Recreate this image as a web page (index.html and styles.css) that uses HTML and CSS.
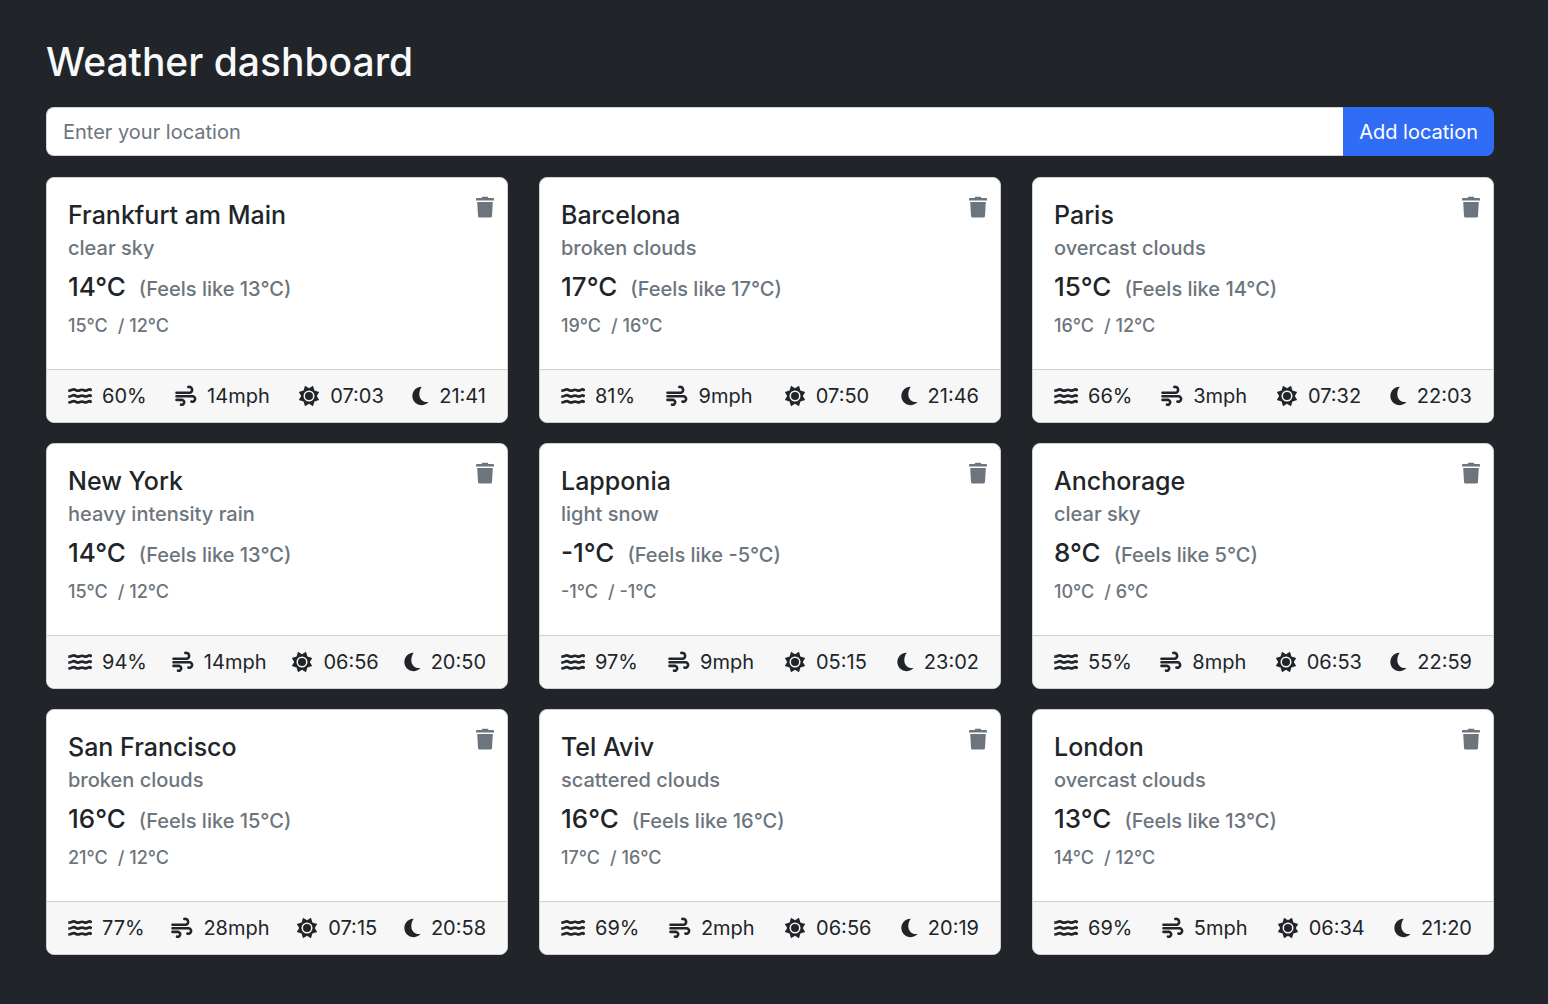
FILE: index.html
```
<!DOCTYPE html>
<html lang="en">
<head>
<meta charset="utf-8">
<meta name="viewport" content="width=device-width, initial-scale=1">
<title>Weather dashboard</title>
<link rel="stylesheet" href="styles.css">
</head>
<body>
<svg class="sprite" aria-hidden="true">
  <symbol id="water" viewBox="0 0 24 22">
    <g fill="none" stroke="currentColor" stroke-width="2.7">
      <path d="M.3 5.700Q2.3 5.700 4.2 4.700T8 5.200Q10 6.100 12 5.200T16 5.200Q18 6.100 20 4.900T23.700 5.700"/>
      <path d="M.3 11.600Q2.300 11.600 4.200 10.600T8 11.100Q10 12 12 11.100T16 11.100Q18 12 20 10.800T23.700 11.600"/>
      <path d="M.3 17.500Q2.300 17.500 4.200 16.500T8 17Q10 17.900 12 17T16 17Q18 17.900 20 16.700T23.700 17.500"/>
    </g>
  </symbol>
  <symbol id="wind" viewBox="0 0 22 22">
    <g fill="none" stroke="currentColor" stroke-width="2.6" stroke-linecap="round">
      <path d="M1.500 7.700H15A2.700 2.700 0 1 0 13.300 2"/>
      <path d="M1.500 11.300H17.400A2.700 2.700 0 1 1 16.400 16.500"/>
      <path d="M1.500 14.900H7.400A2.400 2.400 0 1 1 6 19.700"/>
    </g>
  </symbol>
  <symbol id="sun" viewBox="0 0 22 22">
    <path fill="currentColor" fill-rule="evenodd" d="M7 .8 11 3.2 15 .8 16.4 5.6 21.2 7 18.8 11 21.2 15 16.4 16.4 15 21.2 11 18.8 7 21.2 5.6 16.4 .8 15 3.2 11 .8 7 5.6 5.6ZM11 5.5A5.5 5.5 0 1 0 11 16.500A5.500 5.500 0 1 0 11 5.500Z"/>
    <circle cx="11" cy="11" r="4" fill="currentColor"/>
  </symbol>
  <symbol id="moon" viewBox="0 0 17 22">
    <path fill="currentColor" d="M9.800 1.800A9.200 9.200 0 1 0 16.500 17C10.800 17.800 7.300 14 7.300 9.300 7.300 6.500 8.200 3.800 9.800 1.800Z"/>
  </symbol>
  <symbol id="trash" viewBox="0 0 18 22">
    <path fill="currentColor" d="M1 2H5.500L6.300.8H11.700L12.500 2H17Q18 2 18 3V4.600H0V3Q0 2 1 2ZM1.200 6H16.800L16 20Q15.900 21.500 14.400 21.500H3.600Q2.100 21.500 2 20Z"/>
  </symbol>
</svg>
<main class="page">
  <h1 class="title">Weather dashboard</h1>
  <form class="search">
    <input class="search-input" type="text" placeholder="Enter your location" aria-label="Location">
    <button class="search-button" type="submit">Add location</button>
  </form>
  <section class="cards">
    <article class="card">
      <div class="card-body">
        <button class="remove" type="button" aria-label="Remove Frankfurt am Main"><svg><use href="#trash"/></svg></button>
        <h2 class="city">Frankfurt am Main</h2>
        <p class="sky">clear sky</p>
        <p class="now"><span class="temp">14°C</span><span class="feels">(Feels like 13°C)</span></p>
        <p class="range"><span>15°C</span><span>/ 12°C</span></p>
      </div>
      <footer class="stats">
        <span class="stat"><svg class="wide"><use href="#water"/></svg>60%</span>
        <span class="stat"><svg><use href="#wind"/></svg>14mph</span>
        <span class="stat"><svg><use href="#sun"/></svg>07:03</span>
        <span class="stat"><svg class="narrow"><use href="#moon"/></svg>21:41</span>
      </footer>
    </article>
    <article class="card">
      <div class="card-body">
        <button class="remove" type="button" aria-label="Remove Barcelona"><svg><use href="#trash"/></svg></button>
        <h2 class="city">Barcelona</h2>
        <p class="sky">broken clouds</p>
        <p class="now"><span class="temp">17°C</span><span class="feels">(Feels like 17°C)</span></p>
        <p class="range"><span>19°C</span><span>/ 16°C</span></p>
      </div>
      <footer class="stats">
        <span class="stat"><svg class="wide"><use href="#water"/></svg>81%</span>
        <span class="stat"><svg><use href="#wind"/></svg>9mph</span>
        <span class="stat"><svg><use href="#sun"/></svg>07:50</span>
        <span class="stat"><svg class="narrow"><use href="#moon"/></svg>21:46</span>
      </footer>
    </article>
    <article class="card">
      <div class="card-body">
        <button class="remove" type="button" aria-label="Remove Paris"><svg><use href="#trash"/></svg></button>
        <h2 class="city">Paris</h2>
        <p class="sky">overcast clouds</p>
        <p class="now"><span class="temp">15°C</span><span class="feels">(Feels like 14°C)</span></p>
        <p class="range"><span>16°C</span><span>/ 12°C</span></p>
      </div>
      <footer class="stats">
        <span class="stat"><svg class="wide"><use href="#water"/></svg>66%</span>
        <span class="stat"><svg><use href="#wind"/></svg>3mph</span>
        <span class="stat"><svg><use href="#sun"/></svg>07:32</span>
        <span class="stat"><svg class="narrow"><use href="#moon"/></svg>22:03</span>
      </footer>
    </article>
    <article class="card">
      <div class="card-body">
        <button class="remove" type="button" aria-label="Remove New York"><svg><use href="#trash"/></svg></button>
        <h2 class="city">New York</h2>
        <p class="sky">heavy intensity rain</p>
        <p class="now"><span class="temp">14°C</span><span class="feels">(Feels like 13°C)</span></p>
        <p class="range"><span>15°C</span><span>/ 12°C</span></p>
      </div>
      <footer class="stats">
        <span class="stat"><svg class="wide"><use href="#water"/></svg>94%</span>
        <span class="stat"><svg><use href="#wind"/></svg>14mph</span>
        <span class="stat"><svg><use href="#sun"/></svg>06:56</span>
        <span class="stat"><svg class="narrow"><use href="#moon"/></svg>20:50</span>
      </footer>
    </article>
    <article class="card">
      <div class="card-body">
        <button class="remove" type="button" aria-label="Remove Lapponia"><svg><use href="#trash"/></svg></button>
        <h2 class="city">Lapponia</h2>
        <p class="sky">light snow</p>
        <p class="now"><span class="temp">-1°C</span><span class="feels">(Feels like -5°C)</span></p>
        <p class="range"><span>-1°C</span><span>/ -1°C</span></p>
      </div>
      <footer class="stats">
        <span class="stat"><svg class="wide"><use href="#water"/></svg>97%</span>
        <span class="stat"><svg><use href="#wind"/></svg>9mph</span>
        <span class="stat"><svg><use href="#sun"/></svg>05:15</span>
        <span class="stat"><svg class="narrow"><use href="#moon"/></svg>23:02</span>
      </footer>
    </article>
    <article class="card">
      <div class="card-body">
        <button class="remove" type="button" aria-label="Remove Anchorage"><svg><use href="#trash"/></svg></button>
        <h2 class="city">Anchorage</h2>
        <p class="sky">clear sky</p>
        <p class="now"><span class="temp">8°C</span><span class="feels">(Feels like 5°C)</span></p>
        <p class="range"><span>10°C</span><span>/ 6°C</span></p>
      </div>
      <footer class="stats">
        <span class="stat"><svg class="wide"><use href="#water"/></svg>55%</span>
        <span class="stat"><svg><use href="#wind"/></svg>8mph</span>
        <span class="stat"><svg><use href="#sun"/></svg>06:53</span>
        <span class="stat"><svg class="narrow"><use href="#moon"/></svg>22:59</span>
      </footer>
    </article>
    <article class="card">
      <div class="card-body">
        <button class="remove" type="button" aria-label="Remove San Francisco"><svg><use href="#trash"/></svg></button>
        <h2 class="city">San Francisco</h2>
        <p class="sky">broken clouds</p>
        <p class="now"><span class="temp">16°C</span><span class="feels">(Feels like 15°C)</span></p>
        <p class="range"><span>21°C</span><span>/ 12°C</span></p>
      </div>
      <footer class="stats">
        <span class="stat"><svg class="wide"><use href="#water"/></svg>77%</span>
        <span class="stat"><svg><use href="#wind"/></svg>28mph</span>
        <span class="stat"><svg><use href="#sun"/></svg>07:15</span>
        <span class="stat"><svg class="narrow"><use href="#moon"/></svg>20:58</span>
      </footer>
    </article>
    <article class="card">
      <div class="card-body">
        <button class="remove" type="button" aria-label="Remove Tel Aviv"><svg><use href="#trash"/></svg></button>
        <h2 class="city">Tel Aviv</h2>
        <p class="sky">scattered clouds</p>
        <p class="now"><span class="temp">16°C</span><span class="feels">(Feels like 16°C)</span></p>
        <p class="range"><span>17°C</span><span>/ 16°C</span></p>
      </div>
      <footer class="stats">
        <span class="stat"><svg class="wide"><use href="#water"/></svg>69%</span>
        <span class="stat"><svg><use href="#wind"/></svg>2mph</span>
        <span class="stat"><svg><use href="#sun"/></svg>06:56</span>
        <span class="stat"><svg class="narrow"><use href="#moon"/></svg>20:19</span>
      </footer>
    </article>
    <article class="card">
      <div class="card-body">
        <button class="remove" type="button" aria-label="Remove London"><svg><use href="#trash"/></svg></button>
        <h2 class="city">London</h2>
        <p class="sky">overcast clouds</p>
        <p class="now"><span class="temp">13°C</span><span class="feels">(Feels like 13°C)</span></p>
        <p class="range"><span>14°C</span><span>/ 12°C</span></p>
      </div>
      <footer class="stats">
        <span class="stat"><svg class="wide"><use href="#water"/></svg>69%</span>
        <span class="stat"><svg><use href="#wind"/></svg>5mph</span>
        <span class="stat"><svg><use href="#sun"/></svg>06:34</span>
        <span class="stat"><svg class="narrow"><use href="#moon"/></svg>21:20</span>
      </footer>
    </article>
  </section>
</main>
</body>
</html>
```
FILE: styles.css
```
* {
  box-sizing: border-box;
}

body {
  margin: 0;
  background: #212529;
  color: #212529;
  font-family: Inter, "Liberation Sans", sans-serif;
  font-size: 20px;
  line-height: 32px;
}

h1,
h2,
p {
  margin: 0;
}

.sprite {
  display: none;
}

.page {
  padding: 38px 54px 48px 46px;
}

.title {
  margin-bottom: 21px;
  color: #f8f9fa;
  font-size: 39px;
  font-weight: 500;
  line-height: 48px;
}

.search {
  display: flex;
  margin-bottom: 21px;
}

.search-input {
  flex: 1;
  min-width: 0;
  height: 49px;
  padding: 0 16px;
  border: 1px solid #ced4da;
  border-right: 0;
  border-radius: 8px 0 0 8px;
  background: #fff;
  color: #212529;
  font: inherit;
}

.search-input::placeholder {
  color: #6c757d;
  opacity: 1;
}

.search-button {
  padding: 0 16px;
  border: 0;
  border-radius: 0 8px 8px 0;
  background: #316cf4;
  color: #fff;
  font: inherit;
  cursor: pointer;
}

.cards {
  display: grid;
  grid-template-columns: repeat(3, minmax(0, 1fr));
  gap: 21px 31px;
}

.card {
  display: flex;
  flex-direction: column;
  overflow: hidden;
  border: 1px solid #cfcfcf;
  border-radius: 8px;
  background: #fff;
}

.card-body {
  position: relative;
  padding: 21px 21px 27px;
  color: #6c757d;
  font-weight: 500;
}

.remove {
  position: absolute;
  top: 18px;
  right: 13px;
  padding: 0;
  border: 0;
  background: none;
  color: #6c757d;
  line-height: 0;
  cursor: pointer;
}

.remove svg {
  width: 18px;
  height: 22px;
}

.city,
.temp {
  color: #212529;
  font-size: 25px;
  font-weight: 500;
}

.temp {
  font-size: 26px;
}

.city {
  margin-bottom: 1px;
}

.sky {
  margin-bottom: 7px;
}

.now {
  display: flex;
  align-items: baseline;
  gap: 13px;
}

.range {
  display: flex;
  gap: 10px;
  margin-top: 5px;
  font-size: 18px;
}

.cards {
  row-gap: 20px;
}

.stats {
  display: flex;
  justify-content: space-between;
  padding: 10px 21px;
  border-top: 1px solid #cfcfcf;
  background: #f7f7f7;
}

.stat {
  display: flex;
  align-items: center;
  gap: 10px;
}

.stat svg {
  flex: none;
  width: 22px;
  height: 22px;
}

.stat .wide {
  width: 24px;
}

.stat .narrow {
  width: 17px;
}
```
